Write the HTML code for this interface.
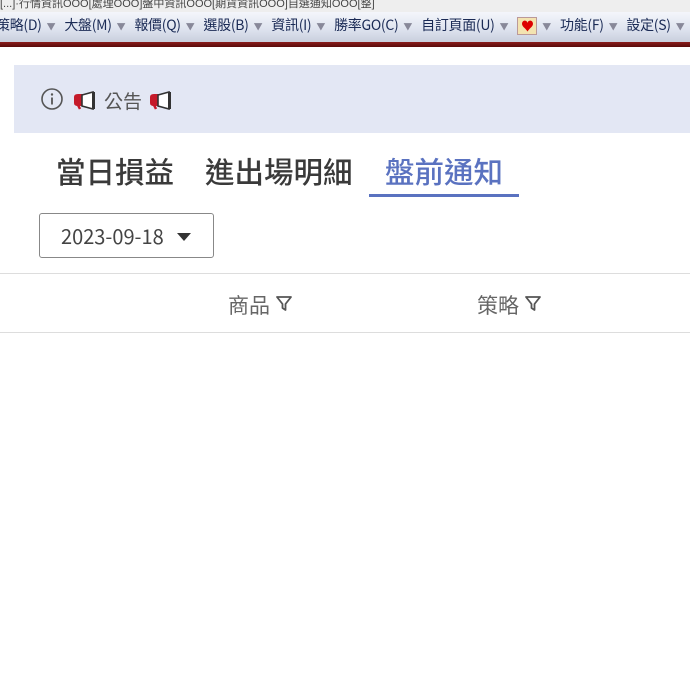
<!DOCTYPE html>
<html><head><meta charset="utf-8"><style>
*{margin:0;padding:0;box-sizing:border-box}
body{width:690px;height:681px;background:#fff;position:relative;overflow:hidden;font-family:"Liberation Sans","Noto Sans CJK TC",sans-serif}
.a{position:absolute}
.top{left:0;top:0;width:690px;height:12px;background:#eee;color:#444;font-size:11px;line-height:8px;overflow:hidden;white-space:nowrap}
.menu{left:-4px;top:12px;width:700px;height:30px;background:linear-gradient(#f4f6fb,#dde2ee 60%,#c9cfdd);font-size:14px;color:#1a2a55;line-height:26px;white-space:nowrap;font-family:"Noto Sans CJK TC",sans-serif;letter-spacing:-0.3px}
.menu span.d{color:#889;font-size:9px;margin:0 9px 0 5px}
.line{left:0;top:42px;width:690px;height:5px;background:linear-gradient(#8a1c1c,#5a0a0a)}
.ban{left:14px;top:65px;width:676px;height:68px;background:#e3e7f4}
.tab{top:149px;font-size:29.5px;color:#3a3a3a;font-family:"Noto Sans CJK TC",sans-serif;line-height:44px;font-weight:500}
</style></head><body>
<div class="a top">[...]·行情資訊OOO[處理OOO]盤中資訊OOO[期貨資訊OOO]自選通知OOO[整]</div>
<div class="a menu">策略(D)<span class="d">▼</span>大盤(M)<span class="d">▼</span>報價(Q)<span class="d">▼</span>選股(B)<span class="d">▼</span>資訊(I)<span class="d">▼</span>勝率GO(C)<span class="d">▼</span>自訂頁面(U)<span class="d">▼</span><span style="display:inline-block;width:20px;height:18px;background:#f3e3b0;border:1px solid #b99;vertical-align:middle;color:#d00;font-size:13px;line-height:16px;text-align:center">♥</span><span class="d">▼</span>功能(F)<span class="d">▼</span>設定(S)<span class="d">▼</span></div>
<div class="a line"></div>
<div class="a ban"></div>
<svg class="a" style="left:40px;top:87px" width="24" height="24" viewBox="0 0 24 24"><circle cx="12" cy="12" r="10" fill="none" stroke="#555" stroke-width="1.6"/><circle cx="12" cy="7.5" r="1.2" fill="#555"/><path d="M12 10.5v7" stroke="#555" stroke-width="1.8"/></svg>
<svg class="a" style="left:73px;top:91px" width="26" height="19" viewBox="0 0 26 19"><path d="M1 6q0-3 4-3h5v12H5q-4 0-4-3z" fill="#c51a2a"/><path d="M9 4l11-3v17L9 15z" fill="#fff" stroke="#333" stroke-width="1.6"/><rect x="19" y="1" width="3" height="17" fill="#333"/><path d="M5 14l2 4" stroke="#c51a2a" stroke-width="2.5"/></svg>
<div class="a" style="left:104px;top:88px;font-size:19px;color:#555;font-family:'Noto Sans CJK TC',sans-serif;line-height:26px">公告</div>
<svg class="a" style="left:149px;top:91px" width="26" height="19" viewBox="0 0 26 19"><path d="M1 6q0-3 4-3h5v12H5q-4 0-4-3z" fill="#c51a2a"/><path d="M9 4l11-3v17L9 15z" fill="#fff" stroke="#333" stroke-width="1.6"/><rect x="19" y="1" width="3" height="17" fill="#333"/><path d="M5 14l2 4" stroke="#c51a2a" stroke-width="2.5"/></svg>
<div class="a tab" style="left:56px">當日損益</div>
<div class="a tab" style="left:205px">進出場明細</div>
<div class="a tab" style="left:385px;color:#5a72c0">盤前通知</div>
<div class="a" style="left:369px;top:194px;width:150px;height:3px;background:#5a72c0"></div>
<div class="a" style="left:39px;top:213px;width:175px;height:45px;border:1px solid #888;border-radius:3px;font-size:20px;color:#444;line-height:43px;padding-left:21px;font-family:'Noto Sans CJK TC',sans-serif">2023-09-18<span style="position:absolute;left:137px;top:19px;border-left:7px solid transparent;border-right:7px solid transparent;border-top:8px solid #333"></span></div>
<div class="a" style="left:0;top:273px;width:690px;height:1px;background:#ddd"></div>
<div class="a" style="left:0;top:332px;width:690px;height:1px;background:#ddd"></div>
<div class="a" style="left:228px;top:290px;font-size:21px;color:#666;line-height:30px;font-family:'Noto Sans CJK TC',sans-serif">商品</div>
<div class="a" style="left:477px;top:290px;font-size:21px;color:#666;line-height:30px;font-family:'Noto Sans CJK TC',sans-serif">策略</div>
<svg class="a" style="left:275px;top:295px" width="18" height="18" viewBox="0 0 18 18"><path d="M2 2h14l-5.5 7v6l-3 -2V9z" fill="none" stroke="#555" stroke-width="1.8" stroke-linejoin="round"/></svg>
<svg class="a" style="left:524px;top:295px" width="18" height="18" viewBox="0 0 18 18"><path d="M2 2h14l-5.5 7v6l-3 -2V9z" fill="none" stroke="#555" stroke-width="1.8" stroke-linejoin="round"/></svg>
</body></html>
